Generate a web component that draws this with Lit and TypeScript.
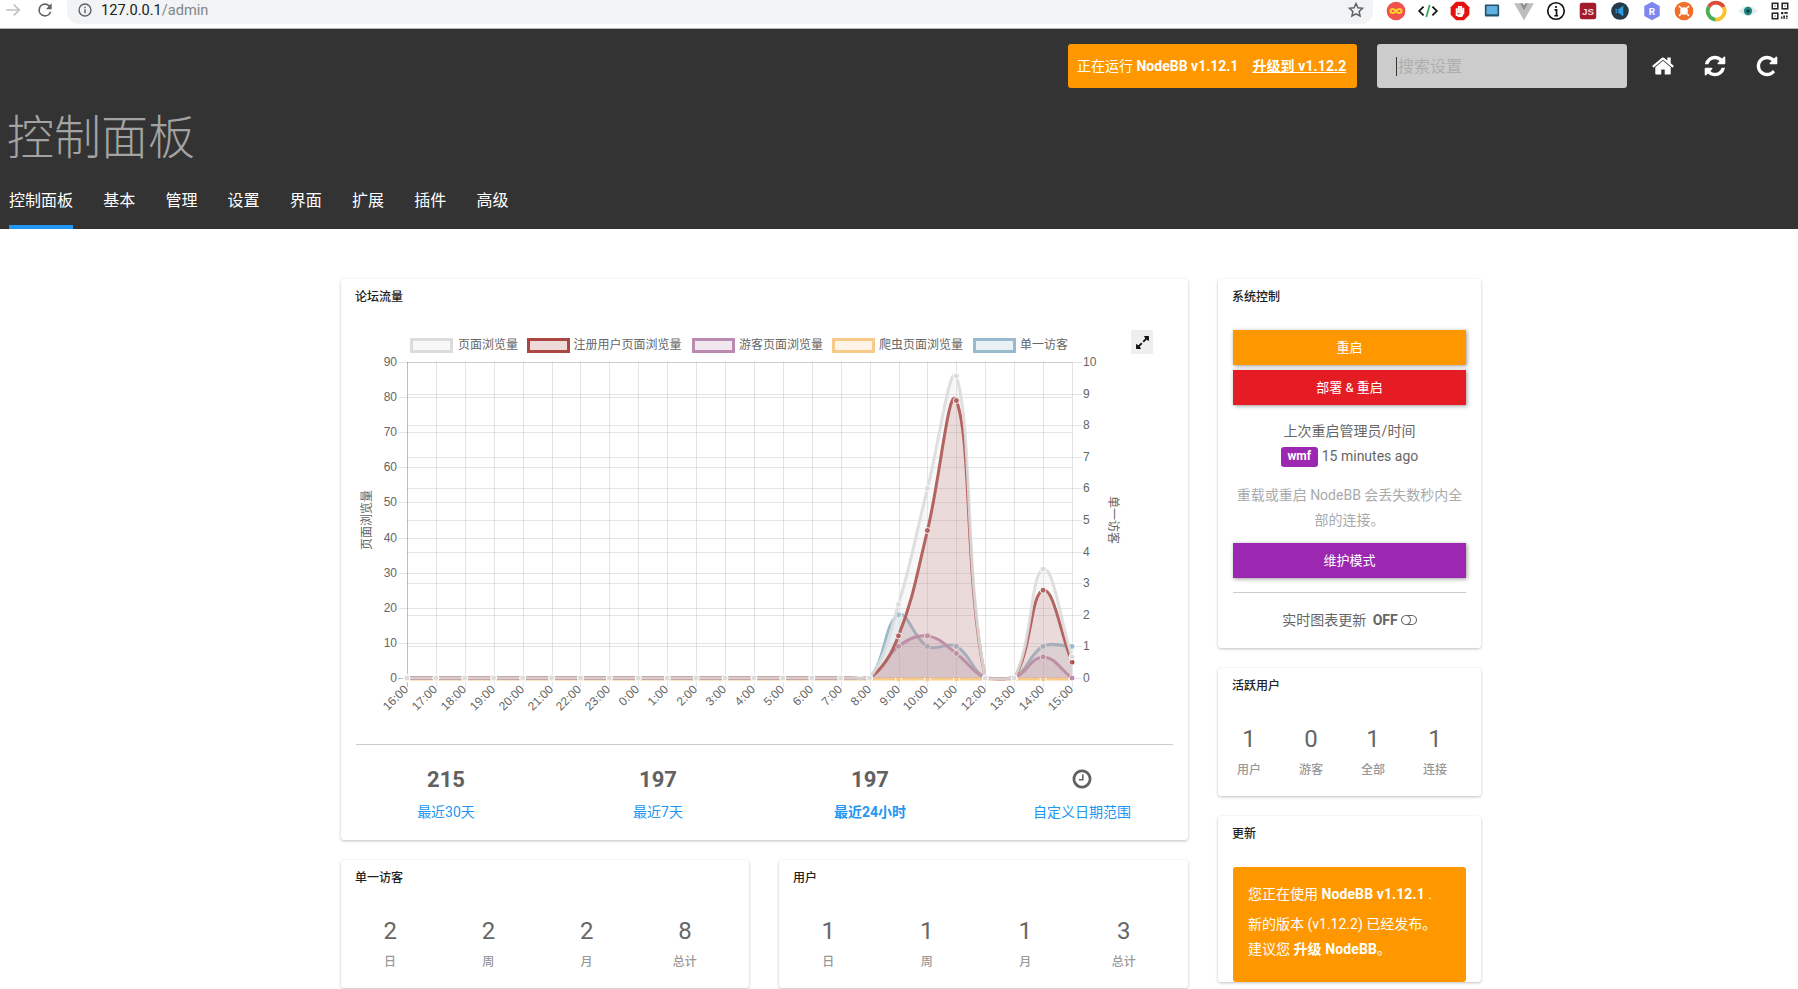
import { LitElement, html, css, svg } from "lit";
import { customElement } from "lit/decorators.js";

const L = 407, R = 1072, T = 362, B = 678;
const XS = (R - L) / 23;
const hours = [16,17,18,19,20,21,22,23,0,1,2,3,4,5,6,7,8,9,10,11,12,13,14,15].map((h) => `${h}:00`);

function series(vals: Record<number, number>) {
  return hours.map((_, i) => vals[i] ?? 0);
}
const left = (v: number) => B - (v / 90) * (B - T);
const right = (v: number) => B - (v / 10) * (B - T);

const datasets = [
  { name: "页面浏览量", c: "220,220,220", o: 0.9, ys: series({ 17: 21, 18: 54, 19: 86, 22: 31, 23: 6 }).map(left), base: B },
  { name: "注册用户页面浏览量", c: "171,70,66", o: 1, ys: series({ 17: 12, 18: 42, 19: 79, 22: 25, 23: 4.5 }).map(left), base: B },
  { name: "游客页面浏览量", c: "186,139,175", o: 1, ys: series({ 17: 9, 18: 12, 19: 7, 22: 6, 23: 0 }).map(left), base: B },
  { name: "爬虫页面浏览量", c: "247,202,136", o: 1, ys: series({}).map((v) => left(v) + 1), base: B + 1 },
  { name: "单一访客", c: "151,187,205", o: 1, ys: series({ 17: 2, 18: 1, 19: 1, 22: 1, 23: 1 }).map(right), base: B },
];

function spline(ys: number[], tension = 0.4) {
  const pts = ys.map((y, i) => ({ x: L + i * XS, y }));
  const clampY = (v: number) => Math.min(B + 1, Math.max(T, v));
  const clampX = (v: number) => Math.min(R, Math.max(L, v));
  const ctrl = pts.map((p, i) => {
    const a = pts[i - 1] ?? p;
    const b = pts[i + 1] ?? p;
    const d1 = Math.hypot(p.x - a.x, p.y - a.y);
    const d2 = Math.hypot(b.x - p.x, b.y - p.y);
    const total = d1 + d2 || 1;
    const fa = (tension * d1) / total;
    const fb = (tension * d2) / total;
    return {
      px: clampX(p.x - fa * (b.x - a.x)),
      py: clampY(p.y - fa * (b.y - a.y)),
      nx: clampX(p.x + fb * (b.x - a.x)),
      ny: clampY(p.y + fb * (b.y - a.y)),
    };
  });
  let d = `M${pts[0].x} ${pts[0].y}`;
  for (let i = 1; i < pts.length; i++) {
    d += `C${ctrl[i - 1].nx} ${ctrl[i - 1].ny} ${ctrl[i].px} ${ctrl[i].py} ${pts[i].x} ${pts[i].y}`;
  }
  return { d, pts };
}

const legend = [
  { box: 410, text: 458 },
  { box: 527, text: 573.5 },
  { box: 692, text: 739 },
  { box: 832, text: 879 },
  { box: 973, text: 1020 },
];

const P = {
  home: "M1472 992v480q0 26-19 45t-45 19h-384v-384h-256v384h-384q-26 0-45-19t-19-45v-480q0-1 .5-3t.5-3l575-474 575 474q1 2 1 6zm223-69l-62 74q-8 9-21 11h-3q-13 0-21-7l-692-577-692 577q-12 8-24 7-13-2-21-11l-62-74q-8-10-7-23.500t11-21.500l719-599q32-26 76-26t76 26l244 204v-195q0-14 9-23t23-9h192q14 0 23 9t9 23v408l219 182q10 8 11 21.500t-7 23.500z",
  refresh: "M1639 1056q0 5-1 7-64 268-268 434.500t-478 166.500q-146 0-282.500-55t-243.500-157l-129 129q-19 19-45 19t-45-19-19-45v-448q0-26 19-45t45-19h448q26 0 45 19t19 45-19 45l-137 137q71 66 161 102t187 36q134 0 250-65t186-179q11-17 53-117 8-23 30-23h192q13 0 22.500 9.500t9.500 22.500zm25-800v448q0 26-19 45t-45 19h-448q-26 0-45-19t-19-45 19-45l138-138q-148-137-349-137-134 0-250 65t-186 179q-11 17-53 117-8 23-30 23h-199q-13 0-22.500-9.500t-9.500-22.500v-7q65-268 270-434.500t480-166.500q146 0 284 55.500t245 156.500l130-129q19-19 45-19t45 19 19 45z",
  repeat: "M1664 256v448q0 26-19 45t-45 19h-448q-42 0-59-40-17-39 14-69l138-138q-148-137-349-137-104 0-198.500 40.500t-163.500 109.500-109.500 163.500-40.500 198.500 40.500 198.500 109.500 163.500 163.500 109.500 198.500 40.500q119 0 225-52t179-147q7-10 23-12 15 0 25 9l137 138q9 8 9.500 20.500t-7.500 22.500q-109 132-264 204.500t-327 72.500q-156 0-298-61t-245-164-164-245-61-298 61-298 164-245 245-164 298-61q147 0 284.500 55.500t244.500 156.500l130-129q29-31 70-14 39 17 39 59z",
  clock: "M1024 544v448q0 14-9 23t-23 9h-320q-14 0-23-9t-9-23v-64q0-14 9-23t23-9h224v-352q0-14 9-23t23-9h64q14 0 23 9t9 23zm416 352q0-148-73-273t-198-198-273-73-273 73-198 198-73 273 73 273 198 198 273 73 273-73 198-198 73-273zm224 0q0 209-103 385.500t-279.500 279.500-385.500 103-385.500-103-279.500-279.500-103-385.500 103-385.500 279.500-279.500 385.500-103 385.500 103 279.500 279.500 103 385.500z",
  toggle: "M1152 896q0-104-40.500-198.500t-109.500-163.500-163.500-109.500-198.500-40.500-198.500 40.500-163.500 109.500-109.500 163.500-40.500 198.500 40.500 198.500 109.500 163.500 163.500 109.500 198.500 40.500 198.500-40.500 163.500-109.500 109.500-163.500 40.500-198.500zm768 0q0-104-40.500-198.500t-109.500-163.500-163.500-109.500-198.500-40.500h-386q119 90 188.500 224t69.500 288-69.500 288-188.500 224h386q104 0 198.500-40.500t163.500-109.500 109.500-163.500 40.500-198.500zm128 0q0 130-51 248.500t-136.500 204-204 136.500-248.500 51h-768q-130 0-248.500-51t-204-136.500-136.500-204-51-248.500 51-248.500 136.500-204 204-136.500 248.500-51h768q130 0 248.500 51t204 136.500 136.500 204 51 248.500z",
  expand: "M883 1056q0 13-10 23l-332 332 144 144q19 19 19 45t-19 45-45 19h-448q-26 0-45-19t-19-45v-448q0-26 19-45t45-19 45 19l144 144 332-332q10-10 23-10t23 10l114 114q10 10 10 23zm781-864v448q0 26-19 45t-45 19-45-19l-144-144-332 332q-10 10-23 10t-23-10l-114-114q-10-10-10-23t10-23l332-332-144-144q-19-19-19-45t19-45 45-19h448q26 0 45 19t19 45z",
};

const fa = (d: string, cls: string, vb = "0 0 1792 1792") =>
  html`<svg class=${cls} viewBox=${vb} aria-hidden="true"><path d=${d} fill="currentColor"></path></svg>`;

const extIcons = [
  svg`<circle cx="10" cy="10" r="8.500" fill="#f0524c"/><path d="M10 10c-1.500-2.500-5-2.500-5 0s3.500 2.500 5 0 5-2.500 5 0-3.500 2.500-5 0z" fill="none" stroke="#ffd22e" stroke-width="1.800"/>`,
  svg`<path d="M6 6l-4 4 4 4M14 6l4 4-4 4" fill="none" stroke="#111" stroke-width="1.600"/><path d="M11.500 4.500l-3 11" stroke="#3aa757" stroke-width="1.600"/>`,
  svg`<path d="M6.500 1.500h7l5 5v7l-5 5h-7l-5-5v-7z" fill="#e5110e"/><path d="M7 14.500V7.500M9 12V5.500M11 12V5.500M13 12V7c0 3 0 5.500-1.500 7.500H8z" stroke="#fff" stroke-width="1.800" fill="#fff"/>`,
  svg`<rect x="3.500" y="4" width="13" height="11" rx="1" fill="#24506e"/><rect x="5" y="5.500" width="10" height="7.500" fill="#5fb2e0"/>`,
  svg`<path d="M1 3h6l3 5 3-5h6L10 18.500z" fill="#bdbdbd"/><path d="M6.500 3H9l1 2 1-2h2.500L10 9.500z" fill="#8f8f8f"/>`,
  svg`<circle cx="10" cy="10" r="7.500" fill="#fff" stroke="#111" stroke-width="1.500"/><path d="M10 5.500v1.800M8.700 9h1.800v5M8.500 14.300h3.400" stroke="#111" stroke-width="1.500" fill="none"/>`,
  svg`<rect x="2.500" y="2.500" width="15" height="15" rx="2" fill="#a31a2c"/><text x="10" y="13.500" text-anchor="middle" font-size="9" font-weight="700" fill="#f6d7d7" font-family="Liberation Sans">JS</text>`,
  svg`<circle cx="10" cy="10" r="8" fill="#263a47"/><path d="M13 5l-6.500 5L13 15zM6 7.500L9 10l-3 2.500z" fill="#2a9ce0"/>`,
  svg`<path d="M10 1.500l7 4v9l-7 4-7-4v-9z" fill="#7d87ee"/><text x="10" y="13.500" text-anchor="middle" font-size="9" font-weight="700" fill="#fff" font-family="Roboto">R</text>`,
  svg`<circle cx="10" cy="10" r="6" fill="none" stroke="#f26f2b" stroke-width="5"/><path d="M5.500 5.500l2 2M14.500 5.500l-2 2M5.500 14.500l2-2M14.500 14.500l-2-2" stroke="#fff" stroke-width="1.500"/>`,
  svg`<path d="M3.500 6.200A7.800 7.800 0 0 1 17 6.500" fill="none" stroke="#dd4b39" stroke-width="3.500"/><path d="M17 6.500A7.800 7.800 0 0 1 9.500 17.800" fill="none" stroke="#f9c22e" stroke-width="3.500"/><path d="M9.500 17.800A7.800 7.800 0 0 1 3.500 6.200" fill="none" stroke="#4bae4f" stroke-width="3.500"/>`,
  svg`<path d="M1.500 10c5-6 12-6 17 0-5 6-12 6-17 0z" fill="#e2ecea"/><circle cx="10" cy="10" r="3.800" fill="#1f8a84"/><circle cx="10" cy="10" r="1.500" fill="#10343a"/>`,
  svg`<g fill="none" stroke="#222" stroke-width="1.400"><rect x="3" y="3" width="5" height="5"/><rect x="12" y="3" width="5" height="5"/><rect x="3" y="12" width="5" height="5"/></g><path d="M5 5h1v1H5zM14 5h1v1h-1zM5 14h1v1H5zM11 11h2v2h-2zM14 11h3v1.500h-3zM13 14h1.500v3H13zM15.500 14H17v1.500h-1.500zM15.500 16h1.500v1h-1.500zM11 15h1.200v2H11z" fill="#222"/>`,
];

@customElement("app-root")
export class AppRoot extends LitElement {
  static styles = css`
    :host {
      display: block;
      height: 989px;
      overflow: hidden;
      background: #fff;
      font-family: Roboto, "Noto Sans CJK SC", sans-serif;
      font-size: 14px;
      color: #666;
    }
    * { box-sizing: border-box; }

    .toolbar {
      height: 29px;
      display: flex;
      align-items: flex-start;
      background: #fff;
      border-bottom: 1px solid #b5b5b5;
    }
    .nav-btn { width: 20px; height: 20px; flex: none; }
    .fwd { margin-left: 3px; color: #bdc1c6; }
    .reload { margin-left: 12px; color: #5f6368; }
    .pill {
      margin-left: 12px;
      width: 1306px;
      height: 24px;
      flex: none;
      border-radius: 0 0 12px 12px;
      background: #f1f3f4;
      display: flex;
      align-items: center;
      padding: 0 8px 4px 11px;
      font-size: 14.600px;
      color: #80868b;
    }
    .pill b { font-weight: 400; color: #202124; }
    .pill .info { width: 14px; height: 14px; margin-right: 9px; flex: none; }
    .pill .url { flex: 1; }
    .pill .star { width: 18px; height: 18px; flex: none; }
    .exts { display: flex; gap: 10px; margin-left: 12px; }
    .exts svg { width: 22px; height: 22px; display: block; flex: none; }

    header {
      height: 200px;
      background: #333;
      color: #fff;
      padding-top: 15px;
    }
    .top {
      display: flex;
      justify-content: flex-end;
      align-items: center;
      padding-right: 19px;
    }
    .upgrade {
      width: 289px;
      height: 44px;
      background: #ff9800;
      border-radius: 3px;
      display: flex;
      align-items: center;
      padding: 0 0 2px 9px;
      font-size: 14px;
      white-space: nowrap;
    }
    .upgrade b { font-weight: 700; }
    .upgrade u { margin-left: 14px; font-weight: 700; letter-spacing: 0.1px; }
    .search {
      width: 250px;
      height: 44px;
      margin: 0 24px 0 20px;
      background: #ccc;
      border-radius: 3px;
      display: flex;
      align-items: center;
      padding: 0 0 2px 19px;
      font-size: 16px;
      color: #aeaeae;
    }
    .caret { width: 1px; height: 19px; background: #333; margin: 2px 1px 0 0; }
    .top-icons { display: flex; gap: 28px; }
    .top-icons svg { width: 24px; height: 24px; display: block; }
    h1 {
      margin: 22px 0 0 7px;
      font-size: 47px;
      line-height: 56px;
      font-weight: 300;
      color: #a3a3a3;
    }
    nav { display: flex; gap: 30.200px; margin-left: 9px; }
    nav a {
      padding: 24px 0 13px;
      line-height: 22px;
      font-size: 16px;
      border-bottom: 4px solid transparent;
    }
    nav a.on { border-bottom-color: #2196f3; }

    .content {
      display: grid;
      grid-template-columns: 847px 263px;
      gap: 30px;
      padding: 50px 0 0 341px;
      align-items: start;
    }
    .col { display: flex; flex-direction: column; gap: 20px; }
    .card {
      position: relative;
      background: #fff;
      border-radius: 3px;
      box-shadow: 0 1px 3px rgba(0, 0, 0, 0.25);
      padding-top: 10px;
    }
    .title {
      font-size: 12px;
      line-height: 16px;
      font-weight: 500;
      color: #212121;
      padding-left: 14px;
    }
    .chart { display: block; margin-top: 20px; width: 847px; height: 410px; }
    .chart text { font-family: "Liberation Sans", "Noto Sans CJK SC", sans-serif; font-size: 12px; fill: #666; }
    .expand {
      position: absolute;
      left: 790px;
      top: 51px;
      width: 22px;
      height: 24px;
      background: #eee;
      display: flex;
      align-items: center;
      justify-content: center;
      color: #111;
    }
    .expand svg { width: 15px; height: 15px; }
    .rule { height: 1px; background: #ccc; }
    .chart-rule { margin: 9px 15px 0; }
    .ranges {
      display: grid;
      grid-template-columns: repeat(4, 212px);
      margin-left: -1px;
      padding: 20px 0 18px;
      text-align: center;
    }
    .ranges .v {
      height: 30px;
      line-height: 30px;
      font-size: 22px;
      font-weight: 700;
      color: #616161;
      display: flex;
      align-items: center;
      justify-content: center;
    }
    .ranges .v svg { width: 22px; height: 22px; margin-top: -2px; }
    .ranges a { display: block; margin-top: 7px; line-height: 20px; color: #2196f3; }
    .ranges a.on { font-weight: 700; }

    .pair { display: grid; grid-template-columns: 408px 409px; gap: 30px; }
    .stats {
      display: grid;
      grid-template-columns: repeat(4, 1fr);
      margin: 30px 15px 18px 0;
      text-align: center;
    }
    .stats .n { font-size: 24px; line-height: 30px; font-weight: 400; color: #666; }
    .stats .l { margin-top: 8px; font-size: 12px; line-height: 16px; font-weight: 500; color: #999; }

    .body { padding: 25px 15px 0; text-align: center; }
    .btn {
      height: 35px;
      display: flex;
      align-items: center;
      justify-content: center;
      padding-bottom: 2px;
      color: #fff;
      font-size: 13px;
      box-shadow: 1px 1px 4px rgba(0, 0, 0, 0.4);
    }
    .btn + .btn { margin-top: 5px; }
    .orange { background: #ff9800; }
    .red { background: #e51c23; }
    .purple { background: #9c27b0; }
    .line { line-height: 22px; }
    .restart { margin-top: 15px; }
    .who { display: flex; justify-content: center; align-items: center; gap: 4px; height: 22px; margin-top: 3px; }
    .badge {
      width: 37px;
      height: 20px;
      margin-top: 2px;
      background: #9c27b0;
      border-radius: 3px;
      color: #fff;
      font-size: 12px;
      font-weight: 700;
      line-height: 19px;
    }
    .hint { margin: 15.500px 0 10.500px; line-height: 25px; color: #aaa; }
    .body .rule { margin-top: 14px; }
    .live {
      margin-top: 17px;
      padding-bottom: 18px;
      line-height: 20px;
      display: flex;
      justify-content: center;
      align-items: center;
      gap: 3px;
      white-space: pre;
    }
    .live svg { width: 16px; height: 16px; }
    .alert {
      margin: 25px 15px 0;
      height: 115px;
      padding: 15px 15px 0;
      background: #ff9800;
      border-radius: 3px;
      color: #fff;
      line-height: 24px;
      white-space: nowrap;
    }
    .alert p { margin: 0; }
    .alert p:first-child { margin-bottom: 6px; }
    .alert p:last-child { margin-top: 1px; }
    .alert b { font-weight: 700; letter-spacing: 0.1px; }
  `;

  private renderChart() {
    const grid = "rgba(0,0,0,0.1)";
    const draw = [...datasets].reverse().map((s) => {
      const { d, pts } = spline(s.ys);
      return svg`
        <path d="${d}L${R} ${s.base}L${L} ${s.base}Z" fill="rgba(${s.c},0.2)"></path>
        <path d=${d} fill="none" stroke="rgba(${s.c},${s.o})" stroke-width="3"></path>
        ${pts.map((p) => svg`<circle cx=${p.x} cy=${p.y} r="3" fill="rgb(${s.c})" stroke="#fff" stroke-width="1"></circle>`)}
      `;
    });
    return svg`
      ${Array.from({ length: 10 }, (_, i) => {
        const y = Math.round(left(i * 10)) + 0.5;
        return svg`<line x1=${L - 9} x2=${R} y1=${y} y2=${y} stroke=${i === 0 ? "rgba(0,0,0,0.25)" : grid}></line>
          <text x=${L - 10} y=${y} dy="3" text-anchor="end">${i * 10}</text>`;
      })}
      ${Array.from({ length: 11 }, (_, i) => {
        const y = Math.round(right(i)) + 0.5;
        return svg`<line x1=${L} x2=${R + 10} y1=${y} y2=${y} stroke=${grid}></line>
          <text x=${R + 11} y=${y} dy="3">${i}</text>`;
      })}
      ${hours.map((h, i) => {
        const x = Math.round(L + i * XS) + 0.5;
        return svg`<line x1=${x} x2=${x} y1=${T} y2=${B + 9} stroke=${i === 0 ? "rgba(0,0,0,0.25)" : grid}></line>
          <text x=${x + 1.5} y="690" text-anchor="end" transform="rotate(-45 ${x + 1.5} 690)">${h}</text>`;
      })}
      ${draw}
      ${datasets.map((s, i) => svg`
        <rect x=${legend[i].box + 1.5} y="339.500" width="40" height="12" fill="rgba(${s.c},0.2)" stroke="rgb(${s.c})" stroke-width="3"></rect>
        <text x=${legend[i].text} y="349">${s.name}</text>
      `)}
      <text transform="translate(371 520) rotate(-90)" text-anchor="middle">页面浏览量</text>
      <text transform="translate(1109 520) rotate(90)" text-anchor="middle">单一访客</text>
    `;
  }

  private stats(items: [string, string][]) {
    return html`<div class="stats">
      ${items.map(([n, l]) => html`<div><div class="n">${n}</div><div class="l">${l}</div></div>`)}
    </div>`;
  }

  render() {
    return html`
      <div class="toolbar">
        <svg class="nav-btn fwd" viewBox="0 0 24 24"><path d="M4 12h15M13 5.500l6.500 6.500-6.500 6.500" fill="none" stroke="currentColor" stroke-width="2"></path></svg>
        <svg class="nav-btn reload" viewBox="0 0 24 24"><path d="M17.650 6.350A7.950 7.950 0 0 0 12 4a8 8 0 1 0 7.730 10h-2.080A6 6 0 1 1 12 6c1.660 0 3.140.69 4.220 1.780L13 11h7V4z" fill="currentColor"></path></svg>
        <div class="pill">
          <svg class="info" viewBox="0 0 20 20"><circle cx="10" cy="10" r="8.500" fill="none" stroke="#5f6368" stroke-width="2"></circle><path d="M10 9v5.500M10 5.500v2" stroke="#5f6368" stroke-width="2"></path></svg>
          <span class="url"><b>127.0.0.1</b>/admin</span>
          <svg class="star" viewBox="0 0 24 24"><path d="M12 3.500l2.600 5.600 6.100.7-4.500 4.200 1.200 6-5.400-3-5.400 3 1.200-6-4.500-4.200 6.100-.7z" fill="none" stroke="#5f6368" stroke-width="2"></path></svg>
        </div>
        <div class="exts">
          ${extIcons.map((i) => html`<svg viewBox="0 0 20 20">${i}</svg>`)}
        </div>
      </div>

      <header>
        <div class="top">
          <div class="upgrade"><span>正在运行 <b>NodeBB v1.12.1</b></span><u>升级到 v1.12.2</u></div>
          <div class="search"><span class="caret"></span>搜索设置</div>
          <div class="top-icons">
            ${fa(P.home, "")}${fa(P.refresh, "")}${fa(P.repeat, "")}
          </div>
        </div>
        <h1>控制面板</h1>
        <nav>
          <a class="on">控制面板</a><a>基本</a><a>管理</a><a>设置</a><a>界面</a><a>扩展</a><a>插件</a><a>高级</a>
        </nav>
      </header>

      <div class="content">
        <div class="col">
          <section class="card">
            <div class="title">论坛流量</div>
            <svg class="chart" viewBox="341 325 847 410">${this.renderChart()}</svg>
            <div class="expand">${fa(P.expand, "")}</div>
            <div class="rule chart-rule"></div>
            <div class="ranges">
              <div><div class="v">215</div><a>最近30天</a></div>
              <div><div class="v">197</div><a>最近7天</a></div>
              <div><div class="v">197</div><a class="on">最近24小时</a></div>
              <div><div class="v">${fa(P.clock, "")}</div><a>自定义日期范围</a></div>
            </div>
          </section>
          <div class="pair">
            <section class="card">
              <div class="title">单一访客</div>
              ${this.stats([["2", "日"], ["2", "周"], ["2", "月"], ["8", "总计"]])}
            </section>
            <section class="card">
              <div class="title">用户</div>
              ${this.stats([["1", "日"], ["1", "周"], ["1", "月"], ["3", "总计"]])}
            </section>
          </div>
        </div>

        <div class="col">
          <section class="card">
            <div class="title">系统控制</div>
            <div class="body">
              <div class="btn orange">重启</div>
              <div class="btn red">部署 &amp; 重启</div>
              <div class="line restart">上次重启管理员/时间</div>
              <div class="who"><span class="badge">wmf</span><span>15 minutes ago</span></div>
              <div class="hint">重载或重启 NodeBB 会丢失数秒内全部的连接。</div>
              <div class="btn purple">维护模式</div>
              <div class="rule"></div>
              <div class="live">实时图表更新 <b>OFF</b>${fa(P.toggle, "", "0 0 2048 1792")}</div>
            </div>
          </section>
          <section class="card">
            <div class="title">活跃用户</div>
            ${this.stats([["1", "用户"], ["0", "游客"], ["1", "全部"], ["1", "连接"]])}
          </section>
          <section class="card">
            <div class="title">更新</div>
            <div class="alert">
              <p>您正在使用 <b>NodeBB v1.12.1</b> .</p>
              <p>新的版本 (v1.12.2) 已经发布。</p>
              <p>建议您 <b>升级 NodeBB</b>。</p>
            </div>
          </section>
        </div>
      </div>
    `;
  }
}
